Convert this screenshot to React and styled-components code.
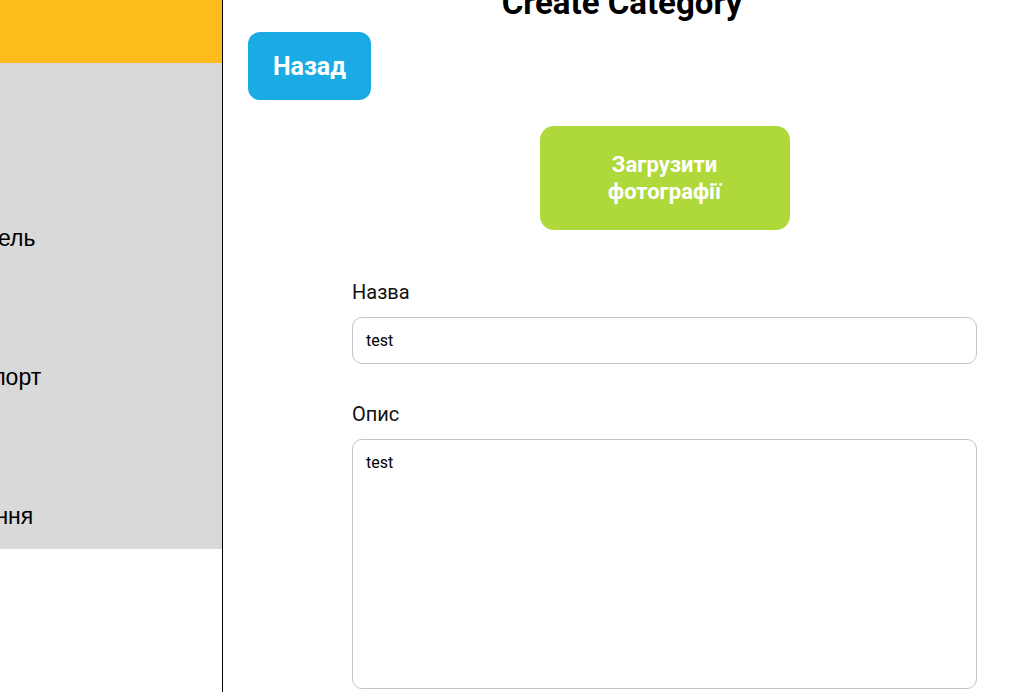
import React from 'react';
import styled, { createGlobalStyle } from 'styled-components';

const GlobalStyle = createGlobalStyle`
  * {
    box-sizing: border-box;
  }
  html, body {
    margin: 0;
    padding: 0;
    background: #ffffff;
    overflow: hidden;
  }
  body {
    font-family: Roboto, 'Liberation Sans', sans-serif;
    color: #000;
  }
`;

const Page = styled.div`
  display: flex;
  height: 692px;
  overflow: hidden;
`;

const Sidebar = styled.aside`
  width: 223px;
  flex-shrink: 0;
  border-right: 1px solid #000;
  display: flex;
  flex-direction: column;
  overflow: hidden;
`;

const SidebarHead = styled.div`
  height: 63px;
  background: #febb1c;
`;

const SidebarNav = styled.nav`
  height: 486px;
  background: #d9d9d9;
  display: flex;
  flex-direction: column;
  padding-top: 164px;
  gap: 116px;
`;

const NavItem = styled.a`
  margin-left: -44px;
  font-family: 'Liberation Sans', Arial, sans-serif;
  font-size: 23px;
  line-height: 23px;
  color: #000;
  text-decoration: none;
  white-space: nowrap;
`;

const Main = styled.main`
  flex: 1;
  display: flex;
  flex-direction: column;
  padding: 0 44px 0 25px;
`;

const Title = styled.h1`
  margin: -17px -44px 0 -25px;
  font-size: 33px;
  line-height: 40px;
  font-weight: 700;
  text-align: center;
`;

const BackButton = styled.button`
  align-self: flex-start;
  margin-top: 9px;
  width: 123px;
  height: 68px;
  border: none;
  border-radius: 12px;
  background: #1aabe4;
  color: #fff;
  font-family: Roboto, sans-serif;
  font-size: 25px;
  font-weight: 700;
  padding: 0;
  cursor: pointer;
`;

const Form = styled.form`
  margin: 26px 0 0 104px;
  display: flex;
  flex-direction: column;
`;

const UploadButton = styled.button`
  align-self: center;
  width: 250px;
  height: 104px;
  border: none;
  border-radius: 14px;
  background: #afd93b;
  color: #fff;
  font-family: Roboto, sans-serif;
  font-size: 22px;
  line-height: 27px;
  font-weight: 700;
  padding: 0 40px;
  cursor: pointer;
`;

const Field = styled.label`
  display: flex;
  flex-direction: column;
  gap: 13px;
  margin-top: ${(p) => p.$gap}px;
`;

const LabelText = styled.span`
  font-size: 20px;
  line-height: 23px;
  color: #111;
`;

const Input = styled.input`
  height: 47px;
  border: 1px solid #c4c4c4;
  border-radius: 10px;
  padding: 0 13px;
  font-family: Roboto, sans-serif;
  font-size: 16px;
  color: #000;
  outline: none;
`;

const TextArea = styled.textarea`
  height: 250px;
  border: 1px solid #c4c4c4;
  border-radius: 10px;
  padding: 13px 13px;
  font-family: Roboto, sans-serif;
  font-size: 16px;
  line-height: 19px;
  color: #000;
  resize: none;
  outline: none;
`;

const navItems = ['Панель', 'Експорт', 'Знання'];

export default function App() {
  return (
    <>
      <GlobalStyle />
      <Page>
        <Sidebar>
          <SidebarHead />
          <SidebarNav>
            {navItems.map((item) => (
              <NavItem key={item} href="#">
                {item}
              </NavItem>
            ))}
          </SidebarNav>
        </Sidebar>
        <Main>
          <Title>Create Category</Title>
          <BackButton type="button">Назад</BackButton>
          <Form onSubmit={(e) => e.preventDefault()}>
            <UploadButton type="button">Загрузити фотографії</UploadButton>
            <Field $gap={51}>
              <LabelText>Назва</LabelText>
              <Input defaultValue="test" />
            </Field>
            <Field $gap={39}>
              <LabelText>Опис</LabelText>
              <TextArea defaultValue="test" />
            </Field>
          </Form>
        </Main>
      </Page>
    </>
  );
}
